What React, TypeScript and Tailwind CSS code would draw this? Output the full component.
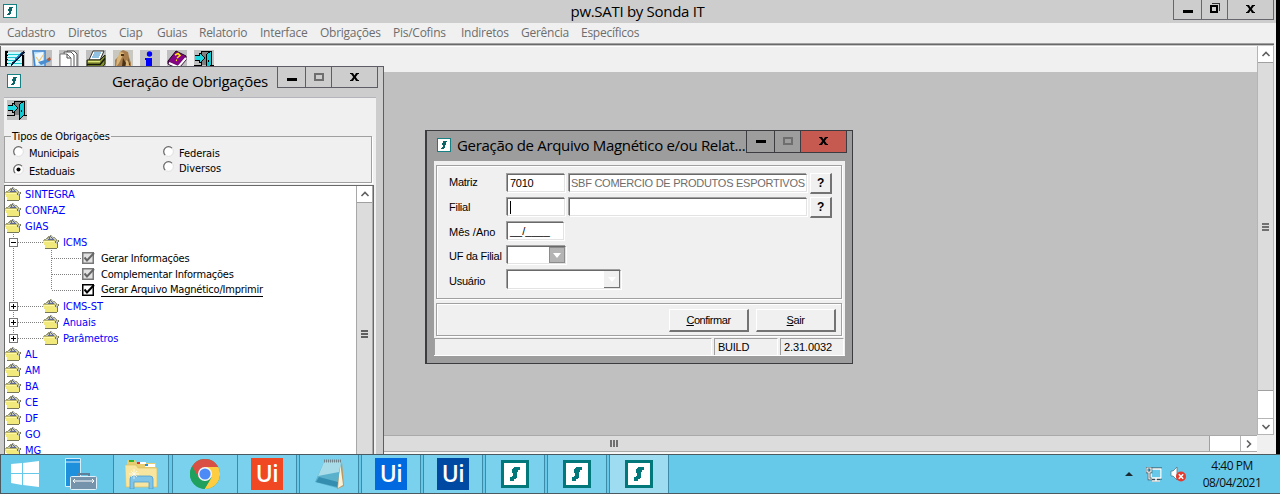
import React from "react";

const SMark = ({ className }: { className: string }) => (
  <svg viewBox="0 0 28 28" className={className}>
    <rect x="1.5" y="1.5" width="25" height="25" fill="#fff" stroke="#03787a" strokeWidth="3" />
    <path d="M13 7h6v3h-2v2h-1v6h-1v1h-2v2H9v-4h2v-1h1v-3h-1v-4h1V8h1z" fill="#03787a" />
  </svg>
);

const SmallSMark = () => (
  <svg viewBox="0 0 14 14" className="block h-[14px] w-[14px] shrink-0" shapeRendering="crispEdges">
    <rect x=".5" y=".5" width="13" height="13" fill="#fff" stroke="#178082" />
    <path d="M6 3h4v1H9v3H8v3H7v1H4v-1h1V9h1V7H5V5h1z" fill="#0b6466" />
  </svg>
);

const Door = () => (
  <svg viewBox="0 0 20 20" className="block h-5 w-5 shrink-0" shapeRendering="crispEdges">
    <rect width="20" height="20" fill="#c0c0c0" />
    <path d="M8 1h9v14H8z" fill="#808080" />
    <path d="M7 1h11v1H8v3H7zM7 12h1v4H0v-1h7zM17 2h1v13h2v1h-3z" fill="#000" />
    <path d="M1 5h4V3h2l4 5-4 5H5v-2H1z" fill="#000" />
    <path d="M1 6h5V4l4 4-4 4v-2H1z" fill="#1fd8df" />
    <path d="M12 4l5-3v15l-5 4z" fill="#000" />
    <path d="M13 4l4-2v13l-4 3z" fill="#12c9d2" />
    <path d="M14 10h1v2h-1z" fill="#000" />
  </svg>
);

const Folder = () => (
  <svg viewBox="0 0 16 14" className="block h-[14px] w-4 shrink-0" shapeRendering="crispEdges">
    <path d="M1 4h2V3h1V2h1V1h2V0h2v1h1v1h2v1h1v1h1v1h1v8H2z" fill="#c4c6b8" />
    <path d="M1 4h2V3h1V2h1V1h2V0h1v1H7v1H6v1H5v1H3v1H1zM10 2h2v1h1v1h1v2h-1V4h-1V3h-2z" fill="#9a9a76" />
    <path d="M7 1h1v1h1v1H8V2H7v1H6V2h1zM5 4h1V3h1v1h2V3h1v1h1v1H5z" fill="#5f6890" />
    <path d="M0 5h12v2h1v2h1v4H2v-3H1V8H0z" fill="#f1e97c" />
    <path d="M0 5h12v1H0z" fill="#b9b36a" />
    <path d="M1 6h10v1H1z" fill="#fff8a8" />
    <path d="M2 13h12v1H2zM14 7h1v6h-1zM15 5h1v2h-1zM12 6h1v2h-1z" fill="#77775a" />
  </svg>
);

const Check = ({ dark }: { dark?: boolean }) => (
  <svg viewBox="0 0 13 12" className="block h-3 w-[13px] shrink-0">
    <rect x=".75" y=".75" width="10.5" height="10.5" fill={dark ? "#fff" : "#e2e2e2"} stroke={dark ? "#000" : "#777"} strokeWidth="1.5" />
    <path d="M2.5 5.5L5 8.5 12 1" fill="none" stroke={dark ? "#000" : "#666"} strokeWidth="2" />
  </svg>
);

const Chevron = ({ d }: { d: string }) => (
  <svg viewBox="0 0 10 10" className="block h-[10px] w-[10px]">
    <path d={d} fill="none" stroke="#606060" strokeWidth="1.6" />
  </svg>
);
const UP = "M1.5 7L5 3.5 8.500 7";
const DOWN = "M1.500 3L5 6.500 8.500 3";
const RIGHT = "M3 1.500L6.500 5 3 8.500";

const Minimize = () => <div className="h-[3px] w-[10px] bg-black" />;
const Maximize = () => <div className="h-2 w-[10px] border-2 border-[#6e6e6e]" />;
const Cross = () => (
  <svg viewBox="0 0 9 8" className="block h-2 w-[9px]">
    <path d="M0 0h3l1.500 2.500L6 0h3v1H8L5.800 4 8 7h1v1H6L4.500 5.500 3 8H0V7h1l2.200-3L1 1H0z" fill="#000" />
  </svg>
);

const ToolbarIcons = () => (
  <div className="flex h-5 gap-[7px] pl-[5px]">
    <svg viewBox="0 0 20 20" className="h-5 w-5" shapeRendering="crispEdges">
      <path d="M0 0h20v20H0z" fill="#c0c0c0" />
      <path d="M1 2h16v18H1z" fill="#c8fbff" />
      <path d="M2 4.500h14M2 7.500h13M2 10.500h13M2 13.500h15M2 16.500h15" stroke="#1cc6ce" />
      <path d="M0 1h3v2H2v2h1v1H2v3h1v1H2v3h1v1H2v3H0zM17 5h2v15h-2z" fill="#000" />
      <path d="M18 1l2 1L9 14l-3 2 1-4z" fill="#06183a" />
      <path d="M17 2L8 12" stroke="#168dcc" />
    </svg>
    <svg viewBox="0 0 20 20" className="h-5 w-5">
      <path d="M0 0h20v20H0z" fill="#c0c0c0" />
      <path d="M1 1h12v16H3z" fill="#b5dcfb" stroke="#4286cf" strokeWidth="1.500" />
      <path d="M3 4l8-2v12l-7 1z" fill="#eef8ff" />
      <path d="M4 7l3 4 5-7" fill="none" stroke="#edc676" strokeWidth="1.200" />
      <path d="M6 12l10-3 3 2-10 4z" fill="#4a8ed0" />
      <path d="M15 9l3-2 1 3-3 1z" fill="#ad5b38" />
    </svg>
    <svg viewBox="0 0 20 20" className="h-5 w-5">
      <path d="M0 0h20v20H0z" fill="#c0c0c0" />
      <path d="M8 1h7l3 3v13h-6z" fill="#fff" stroke="#555" />
      <path d="M5 2h7l3 3v13H7z" fill="#fff" stroke="#555" />
      <path d="M1 4h7l4 4v12H1z" fill="#fff" stroke="#777" />
      <path d="M8 4v4h4" fill="none" stroke="#444" />
    </svg>
    <svg viewBox="0 0 20 20" className="h-5 w-5">
      <path d="M0 0h20v20H0z" fill="#c0c0c0" />
      <path d="M7 1h11l-4 9H3z" fill="#fff" stroke="#333" />
      <path d="M8 3h7M7 5h7M6 7h7" stroke="#2484c6" />
      <path d="M1 10h13l5-5v9l-5 6H1z" fill="#858d31" stroke="#1c2108" />
      <path d="M2 11.500h12" stroke="#dce679" strokeWidth="1.500" />
      <path d="M1 14.500h13l5-6" fill="none" stroke="#151a08" strokeWidth="1.500" />
    </svg>
    <svg viewBox="0 0 20 20" className="h-5 w-5">
      <path d="M0 0h20v20H0z" fill="#c9c8c0" />
      <path d="M7 2l3-2 5 2 1 5 2 6v7H2V10l4-4z" fill="#a77e4b" />
      <path d="M7 2l4 1-2 4-3 6-3 4 1-8zM13 10l3 2v5h-4z" fill="#dbb67b" />
      <path d="M8 4h3v2H8zM10 8l3 5-1 5-3-2zM15 7l2 8h-1z" fill="#493217" />
    </svg>
    <svg viewBox="0 0 20 20" className="h-5 w-5">
      <path d="M0 0h20v20H0z" fill="#c0c0c0" />
      <circle cx="9.500" cy="4" r="2.700" fill="#00f" />
      <path d="M5 8h7v12H6V10H5z" fill="#00f" />
    </svg>
    <svg viewBox="0 0 20 20" className="h-5 w-5">
      <path d="M0 0h20v20H0z" fill="#c0c0c0" />
      <path d="M9 1l10 5v4l-8 9L1 14v-3z" fill="#70106f" stroke="#200020" />
      <path d="M2 13l9 4 8-9" fill="none" stroke="#fff" strokeWidth="2" />
      <path d="M9 2l9 4-7 9-9-4z" fill="#850385" />
      <path d="M8 5l3-1.500 2 2-3 2.500M9 10l1 .5" fill="none" stroke="#ffe800" strokeWidth="1.600" />
    </svg>
    <Door />
  </div>
);

const menus = [
  { t: "Cadastro", c: "w-[61px]" },
  { t: "Diretos", c: "w-[51px]" },
  { t: "Ciap", c: "w-[38px]" },
  { t: "Guias", c: "w-[42px]" },
  { t: "Relatorio", c: "w-[61px]" },
  { t: "Interface", c: "w-[60px]" },
  { t: "Obrigações", c: "w-[73px]" },
  { t: "Pis/Cofins", c: "w-[68px]" },
  { t: "Indiretos", c: "w-[60px]" },
  { t: "Gerência", c: "w-[60px]" },
  { t: "Específicos", c: "w-[70px]" },
];

const MainWindow = () => (
  <div className="flex h-[454px] bg-black">
    <div className="flex w-[1276px] flex-col bg-[#f0f0f0]">
      <div className="flex h-[23px] shrink-0 bg-[#cdcdcd]">
        <div className="w-[300px] pl-[3px] pt-1"><SmallSMark /></div>
        <div className="w-[675px] text-center font-['Open_Sans',sans-serif] text-[15px] leading-[23px] tracking-[-0.3px] text-black">pw.SATI by Sonda IT</div>
        <div className="ml-[198px] flex h-[20px] w-[101px] border-x border-b border-[#66666c]">
          <div className="flex w-[28px] items-end justify-center border-r border-[#66666c] pb-[6px]"><Minimize /></div>
          <div className="flex w-[26px] items-center justify-center border-r border-[#66666c] pb-1">
            <svg viewBox="0 0 10 10" className="h-[10px] w-[10px]" shapeRendering="crispEdges">
              <path d="M2 0h8v8H9V1H2z" fill="#333" />
              <rect x="1" y="3" width="6" height="6" fill="none" stroke="#000" strokeWidth="2" />
            </svg>
          </div>
          <div className="flex flex-1 items-center justify-center pb-px"><Cross /></div>
        </div>
      </div>
      <div className="flex h-5 shrink-0 pl-[7px] font-['Open_Sans',sans-serif] text-[12px] leading-[20px] tracking-[-0.26px] text-[#6d6d6d]">
        {menus.map((m) => <div key={m.t} className={m.c}>{m.t}</div>)}
      </div>
      <div className="h-[3px] w-[1274px] shrink-0 border-t border-b border-t-[#a0a0a0] border-b-[#c8c8c8] bg-[#696969]" />
      <div className="flex min-h-0 flex-1 border-l border-[#696969]">
        <div className="flex w-[1256px] flex-col">
          <div className="h-[26px] shrink-0 border-t border-white pt-[3px]"><div className="-ml-px"><ToolbarIcons /></div></div>
          <div className="flex-1 bg-[#c0c0c0]" />
          <div className="flex h-[17px] shrink-0 border-y border-[#a9a9a9] bg-white">
            <div className="flex w-[1209px] justify-center border-r border-[#a0a0a0] bg-[#dcdcdc] pt-1">
              <div className="ml-[17px] flex gap-px">
                <div className="h-[7px] w-[2px] bg-[#707070]" /><div className="h-[7px] w-[2px] bg-[#707070]" /><div className="h-[7px] w-[2px] bg-[#707070]" />
              </div>
            </div>
            <div className="ml-auto flex w-[17px] items-center justify-center border-l border-[#b5b5b5]"><Chevron d={RIGHT} /></div>
          </div>
          <div className="h-[2px] shrink-0 bg-[#f7f7f7]" />
        </div>
        <div className="flex w-[17px] flex-col">
          <div className="flex h-[389px] flex-col border-x border-b border-[#b5b5b5] bg-white">
            <div className="flex h-4 shrink-0 items-center justify-center"><Chevron d={UP} /></div>
            <div className="flex h-[329px] shrink-0 flex-col items-center justify-center gap-px border-y border-[#a0a0a0] bg-[#dcdcdc]">
              <div className="h-[2px] w-[7px] bg-[#707070]" /><div className="h-[2px] w-[7px] bg-[#707070]" /><div className="h-[2px] w-[7px] bg-[#707070]" />
            </div>
            <div className="mt-auto flex h-[16px] items-center justify-center border-t border-[#b5b5b5]"><Chevron d={DOWN} /></div>
          </div>
        </div>
      </div>
    </div>
  </div>
);

const Radio = ({ label, on }: { label: string; on?: boolean }) => (
  <div className="flex h-[14px] items-start gap-[5px]">
    <svg viewBox="0 0 12 12" className="h-[11px] w-[11px]">
      <circle cx="6" cy="6" r="5.300" fill="#fff" stroke="#ddd" />
      <path d="M2.300 9.800A5.300 5.300 0 0 1 9.800 2.300" fill="none" stroke="#696969" strokeWidth="1.300" />
      {on && <circle cx="6" cy="6" r="2.200" fill="#000" />}
    </svg>
    <span className="leading-[16px]">{label}</span>
  </div>
);

const Root = ({ t }: { t: string }) => (
  <div className="flex h-4 items-center tracking-normal text-[#00f]">
    <Folder />
    <span className="ml-1 pt-[2px] leading-[14px]">{t}</span>
  </div>
);

const Branch = ({ t, open, last }: { t: string; open?: boolean; last?: boolean }) => (
  <div className="flex h-4 items-center tracking-[-0.1px] text-[#00f]">
    <svg viewBox="0 0 38 16" className="h-4 w-[38px]" shapeRendering="crispEdges">
      <path d={last ? "M8.500 0v8M13 8.500h25" : "M8.500 0v16M13 8.500h25"} fill="none" stroke="#808080" strokeDasharray="1 1" />
      <rect x="4.500" y="4.500" width="8" height="8" fill="#fff" stroke="#777" />
      <path d={open ? "M6 8.500h5" : "M6 8.500h5M8.500 6v5"} stroke="#000" />
    </svg>
    <Folder />
    <span className="ml-1 pt-[2px] leading-[14px]">{t}</span>
  </div>
);

const Leaf = ({ t, sel }: { t: string; sel?: boolean }) => (
  <div className="flex h-4 items-center tracking-[-0.22px] text-black">
    <svg viewBox="0 0 77 16" className="h-4 w-[77px]" shapeRendering="crispEdges">
      <path d={sel ? "M8.500 0v16M46.500 0v8M47 8.500h30" : "M8.500 0v16M46.500 0v16M47 8.500h30"} fill="none" stroke="#808080" strokeDasharray="1 1" />
    </svg>
    <Check dark={sel} />
    <span className={sel ? "ml-[6px] border-b border-black pt-px leading-[12px]" : "ml-[6px] pt-[2px] leading-[14px]"}>{t}</span>
  </div>
);

const ObligationsWindow = () => (
  <div className="absolute left-0 top-[66px] flex h-[388px] w-[384px] flex-col border-r border-t border-[#5d5d65] bg-[#cdcdcd]">
    <div className="flex h-[30px] shrink-0">
      <div className="w-[112px] pl-[7px] pt-[7px]"><SmallSMark /></div>
      <div className="w-[165px] whitespace-nowrap font-['Open_Sans',sans-serif] text-[15px] leading-[29px] tracking-[-0.33px] text-black">Geração de Obrigações</div>
      <div className="flex h-[21px] w-[101px] border-x border-b border-[#5d5d65]">
        <div className="flex w-[28px] items-end justify-center border-r border-[#5d5d65] pb-[6px]"><Minimize /></div>
        <div className="flex w-[26px] items-center justify-center border-r border-[#5d5d65]"><Maximize /></div>
        <div className="flex flex-1 items-center justify-center"><Cross /></div>
      </div>
    </div>
    <div className="ml-1 flex min-h-0 w-[372px] flex-1 flex-col border-t border-[#b4b4bb] bg-[#f0f0f0] font-['DejaVu_Sans_Condensed','DejaVu_Sans',sans-serif] text-[11px] font-stretch-condensed tracking-[-0.25px]">
      <div className="h-[32px] shrink-0 pl-[3px] pt-[2px]"><Door /></div>
      <fieldset className="h-[53px] w-[368px] shrink-0 border border-[#a0a0a0] pl-2 shadow-[1px_1px_0_#fff]">
        <legend className="-ml-[2px] px-px leading-[13px] tracking-[-0.15px] text-black">Tipos de Obrigações</legend>
        <div className="flex pt-[3px]">
          <div className="flex w-[150px] flex-col gap-1"><Radio label="Municipais" /><Radio label="Estaduais" on /></div>
          <div className="flex flex-col gap-px tracking-[-0.1px]"><Radio label="Federais" /><Radio label="Diversos" /></div>
        </div>
      </fieldset>
      <div className="mt-[2px] flex min-h-0 w-[370px] flex-1 overflow-hidden border-x border-t border-[#696969] bg-white">
        <div className="w-[351px]">
          <Root t="SINTEGRA" />
          <Root t="CONFAZ" />
          <Root t="GIAS" />
          <Branch t="ICMS" open />
          <Leaf t="Gerar Informações" />
          <Leaf t="Complementar Informações" />
          <Leaf t="Gerar Arquivo Magnético/Imprimir" sel />
          <Branch t="ICMS-ST" />
          <Branch t="Anuais" />
          <Branch t="Parâmetros" last />
          {["AL", "AM", "BA", "CE", "DF", "GO", "MG"].map((t) => <Root key={t} t={t} />)}
        </div>
        <div className="flex w-[17px] flex-col border-x border-[#a8a8a8] bg-[#dcdcdc]">
          <div className="flex h-[17px] shrink-0 items-center justify-center border-b border-[#a0a0a0] bg-white"><Chevron d={UP} /></div>
          <div className="mt-[127px] flex flex-col items-center gap-px">
            <div className="h-[2px] w-[7px] bg-[#606060]" /><div className="h-[2px] w-[7px] bg-[#606060]" /><div className="h-[2px] w-[7px] bg-[#606060]" />
          </div>
        </div>
      </div>
    </div>
  </div>
);

const sunken = "border border-l-[#696969] border-t-[#696969] border-r-[#e3e3e3] border-b-[#e3e3e3] bg-white shadow-[1px_1px_0_#fff,-1px_-1px_0_#a0a0a0]";
const raised = "flex items-center justify-center border-r-2 border-b-2 border-l border-t border-l-white border-t-white border-r-[#737373] border-b-[#737373] bg-[#f0f0f0]";

const DialogBox = () => (
  <div className="absolute left-[425px] top-[130px] flex h-[234px] w-[428px] flex-col border border-l-2 border-[#3b3b40] bg-[#9d9d9d]">
    <div className="flex h-[30px] shrink-0">
      <div className="w-[30px] pl-[10px] pt-[7px]"><SmallSMark /></div>
      <div className="w-[289px] whitespace-nowrap font-['Open_Sans',sans-serif] text-[15px] leading-[29px] tracking-[-0.32px] text-black">Geração de Arquivo Magnético e/ou Relat...</div>
      <div className="flex h-[22px] w-[101px] border-x border-b border-[#3b3b40]">
        <div className="flex w-[28px] items-center justify-center border-r border-[#3b3b40]"><Minimize /></div>
        <div className="flex w-[26px] items-center justify-center border-r border-[#3b3b40] pb-px"><Maximize /></div>
        <div className="flex flex-1 items-center justify-center bg-[#c75a50] pb-px"><Cross /></div>
      </div>
    </div>
    <div className="ml-[7px] flex h-[195px] w-[411px] flex-col bg-[#f0f0f0] pl-[2px] font-['Liberation_Sans',sans-serif] text-[11px] tracking-[-0.25px] text-black">
      <div className="mt-1 flex h-[134px] w-[406px] flex-col border border-[#a0a0a0] pl-3 pt-2 shadow-[inset_1px_1px_0_#fff,1px_1px_0_#fff]">
        <div className="flex h-[24px]">
          <div className="w-[58px] pt-[2px] leading-[12px]">Matriz</div>
          <div className={`${sunken} h-[18px] w-[58px] pl-[2px] leading-[17px]`}>7010</div>
          <div className={`${sunken} ml-1 h-[18px] w-[238px] overflow-hidden whitespace-nowrap pl-px leading-[17px] tracking-[-0.26px] text-[#6d6d6d]`}>SBF COMERCIO DE PRODUTOS ESPORTIVOS</div>
          <div className={`${raised} -mt-px ml-[3px] h-[21px] w-[22px] text-[12px] font-bold`}>?</div>
        </div>
        <div className="flex h-[24px]">
          <div className="w-[58px] pt-[3px] leading-[12px]">Filial</div>
          <div className={`${sunken} h-[18px] w-[58px] pl-[2px] pt-[2px]`}><div className="h-[13px] w-px bg-black" /></div>
          <div className={`${sunken} ml-1 h-[18px] w-[238px]`} />
          <div className={`${raised} -mt-px ml-[3px] h-[21px] w-[22px] text-[12px] font-bold`}>?</div>
        </div>
        <div className="flex h-[24px]">
          <div className="w-[58px] pt-[4px] leading-[12px] tracking-normal">Mês /Ano</div>
          <div className={`${sunken} h-[18px] w-[57px] pl-[2px] leading-[17px] tracking-normal`}>__/____</div>
        </div>
        <div className="flex h-[24px]">
          <div className="w-[58px] pt-[4px] leading-[12px]">UF da Filial</div>
          <div className={`${sunken} flex h-[18px] w-[59px] justify-end`}>
            <div className="flex h-4 w-4 items-center justify-center border border-[#8c8c8c] bg-[#b4b4b4]"><svg viewBox="0 0 8 5" className="h-[5px] w-2"><path d="M0 0h8L4 5z" fill="#fff" /></svg></div>
          </div>
        </div>
        <div className="flex h-[24px]">
          <div className="w-[58px] pt-[5px] leading-[12px]">Usuário</div>
          <div className={`${sunken} flex h-[19px] w-[114px] justify-end`}>
            <div className="flex h-[17px] w-4 items-center justify-center border-r border-b border-[#737373] bg-[#f0f0f0]"><svg viewBox="0 0 8 5" className="h-[5px] w-2"><path d="M0 0h8L4 5z" fill="#fff" /></svg></div>
          </div>
        </div>
      </div>
      <div className="mt-1 flex h-[33px] w-[406px] justify-end gap-[7px] border border-[#a0a0a0] pr-[5px] pt-[5px] tracking-[-0.45px] shadow-[inset_1px_1px_0_#fff,1px_1px_0_#fff]">
        <div className={`${raised} h-[23px] w-[80px]`}><span className="underline">C</span>onfirmar</div>
        <div className={`${raised} h-[23px] w-[80px]`}><span className="underline">S</span>air</div>
      </div>
      <div className="-ml-[2px] mt-[2px] flex h-[18px] gap-[2px] border-b border-white leading-[17px]">
        <div className="w-[278px] border-l border-t border-r border-[#a0a0a0] border-r-white" />
        <div className="w-[64px] border-l border-t border-r border-[#a0a0a0] border-r-white pl-[3px]">BUILD</div>
        <div className="w-[64px] border-l border-t border-r border-[#a0a0a0] border-r-white pl-[3px] tracking-[-0.1px]">2.31.0032</div>
      </div>
    </div>
  </div>
);

const Ui = ({ c }: { c: string }) => (
  <div className={`${c} flex h-8 w-8 items-center justify-center pb-[2px] font-['Open_Sans',sans-serif] text-[23px] font-semibold leading-none tracking-[-0.500px] text-white`}>Ui</div>
);

const Task = ({ w, children }: { w: string; children: React.ReactNode }) => (
  <div className={`${w} flex items-center justify-center border-x border-[#3e8ba8]`}>{children}</div>
);

const Taskbar = () => (
  <div className="flex h-10 border-y border-l border-[#4b5960] bg-[#66c9ea]">
    <div className="flex w-[48px] items-center justify-center">
      <svg viewBox="0 0 28 26" className="h-[26px] w-7"><path d="M0 3l11-1v10H0zM12 2l16-2v12H12zM0 13h11v11L0 22zM12 13h16v13l-16-2z" fill="#fff" /></svg>
    </div>
    <div className="flex w-[64px] items-center justify-center">
      <svg viewBox="0 0 32 32" className="h-8 w-8">
        <path d="M.5.5h15v28H.5z" fill="#1e90dc" stroke="#d6eefa" /><path d="M0 4h16" stroke="#d6eefa" />
        <rect x="5.500" y="18.500" width="26" height="13" rx="1" fill="#7593ab" stroke="#e0f0f8" />
        <path d="M14 18v-2h10v2" fill="none" stroke="#607f98" strokeWidth="2" />
        <path d="M8 23h21M10 21l-2 2 2 2M27 21l2 2-2 2" fill="none" stroke="#fff" />
      </svg>
    </div>
    <Task w="w-[56px] bg-[#7ad1ed]">
      <svg viewBox="0 0 33 30" className="h-[30px] w-[33px]">
        <path d="M2 2q0-1 1-1h7l2 3h19v24H2z" fill="#e8cd70" />
        <path d="M4 1h5v2H4z" fill="#2eb52e" /><path d="M12 3h9v2h-9z" fill="#fff" /><path d="M12 3h3v2h-3z" fill="#d33" /><path d="M20 5h10v3H20z" fill="#fff" /><path d="M20 5h3v2h-3z" fill="#258fe0" />
        <path d="M0 6h11l2 3h19v19H1z" fill="#f8e6a0" stroke="#dabe62" strokeWidth=".7" />
        <path d="M5 30V20q0-3 3-3h17q3 0 3 3v10h-4v-7H9v7z" fill="#80c4e7" stroke="#4b9ed0" strokeWidth=".8" />
        <path d="M9 10v10M4 15h10M6 12l6 6M12 12l-6 6" stroke="#fff" strokeWidth=".7" />
      </svg>
    </Task>
    <div className="w-[3px]" />
    <Task w="w-[66px] bg-[#7ad1ed]">
      <svg viewBox="0 0 30 30" className="h-[30px] w-[30px]">
        <circle cx="15" cy="15" r="15" fill="#1fa15d" />
        <path d="M15 15L2 7.500A15 15 0 0 1 28 7.500z" fill="#d94f43" />
        <path d="M2 7.500L8.500 19 15 15l0-7z" fill="#d94f43" />
        <path d="M15 8h13.300A15 15 0 0 1 14.500 30L21.500 18.500z" fill="#fecd42" />
        <path d="M2 7.500A15 15 0 0 0 14.500 30l6.500-11H9z" fill="#1fa15d" />
        <circle cx="15" cy="15" r="7" fill="#f4f8ff" /><circle cx="15" cy="15" r="5.600" fill="#4c8bf5" />
      </svg>
    </Task>
    <Task w="-ml-px w-[60px] bg-[#7ad1ed]"><Ui c="bg-[#f04822]" /></Task>
    <div className="w-[2px]" />
    <Task w="w-[60px] bg-[#7ad1ed]">
      <svg viewBox="0 0 31 31" className="h-[31px] w-[31px]">
        <path d="M28 3l2 24-7 3-1-5z" fill="#bb9863" /><path d="M26 3l3 23-5 3z" fill="#f7f2dc" />
        <path d="M10 3h17l-4 26L1 23z" fill="#5ab1cc" /><path d="M10 3h17l-2 10L4 17z" fill="#a7dce8" />
        <path d="M2 23l21 5 1-5L5 18z" fill="#348eaf" />
        <path d="M10 2h17" stroke="#70838b" strokeWidth="3" strokeDasharray="1 1" />
      </svg>
    </Task>
    <div className="w-[2px]" />
    <Task w="w-[60px] bg-[#7ad1ed]"><Ui c="bg-[#0069df]" /></Task>
    <div className="w-[2px]" />
    <Task w="w-[60px] bg-[#7ad1ed]"><Ui c="bg-[#0049a3]" /></Task>
    <div className="w-[2px]" />
    <Task w="w-[60px] bg-[#7ad1ed]"><SMark className="h-7 w-7" /></Task>
    <div className="w-[2px]" />
    <Task w="w-[60px] bg-[#7ad1ed]"><SMark className="h-7 w-7" /></Task>
    <div className="w-[2px]" />
    <Task w="w-[60px] bg-[#9edcf2]"><SMark className="h-7 w-7" /></Task>
    <div className="ml-auto flex items-center">
      <svg viewBox="0 0 8 4" className="h-1 w-2"><path d="M0 4l4-4 4 4z" fill="#1b2930" /></svg>
      <svg viewBox="0 0 16 15" className="ml-[13px] h-[15px] w-4">
        <path d="M5 2h10v9H5zM10 11v3M6 14h8" fill="#66c9ea" stroke="#334c57" strokeWidth="3" />
        <path d="M5 2h10v9H5zM10 11v3M6 14h8" fill="#66c9ea" stroke="#fff" strokeWidth="1.500" />
        <path d="M1 1h4v4H1zM3 5v7h3" fill="none" stroke="#334c57" strokeWidth="2.500" /><path d="M1 1h4v4H1zM3 5v7h3" fill="none" stroke="#fff" strokeWidth="1.200" />
      </svg>
      <svg viewBox="0 0 16 16" className="ml-2 h-4 w-4">
        <path d="M1 5h2l4-4v13l-4-4H1z" fill="#fff" stroke="#496d7b" strokeWidth=".7" />
        <circle cx="11" cy="10.500" r="5" fill="#e33b2e" /><path d="M8.800 8.300l4.400 4.400M13.200 8.300l-4.400 4.400" stroke="#fff" strokeWidth="1.500" />
      </svg>
      <div className="ml-4 mr-[18px] w-[60px] whitespace-nowrap text-center font-['Open_Sans',sans-serif] text-[12px] leading-[17px] tracking-[-0.5px] text-[#101010]"><div>4:40 PM</div><div>08/04/2021</div></div>
    </div>
  </div>
);

export default function App() {
  return (
    <div className="relative h-[494px] w-[1280px] overflow-hidden">
      <MainWindow />
      <ObligationsWindow />
      <DialogBox />
      <Taskbar />
    </div>
  );
}
